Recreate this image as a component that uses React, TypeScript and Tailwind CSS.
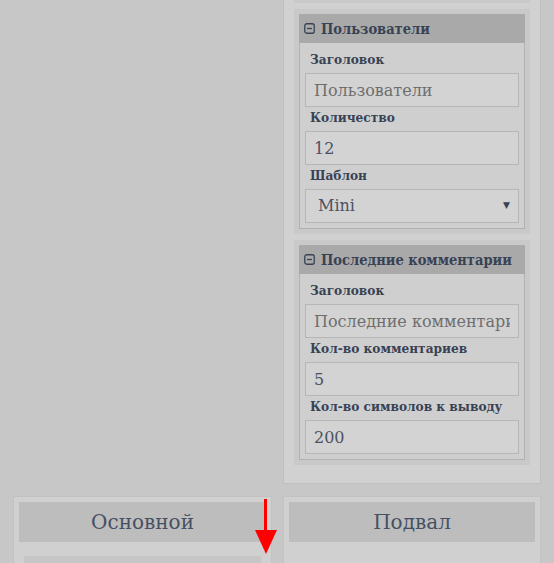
import React from 'react';

const serif = { fontFamily: '"DejaVu Serif", "Liberation Serif", serif' };
const condensed = { fontFamily: '"DejaVu Serif Condensed", "DejaVu Serif", serif' };

type Field = { label: string; value?: string; placeholder?: string; select?: boolean };

const widgets: { title: string; fields: Field[] }[] = [
  {
    title: 'Пользователи',
    fields: [
      { label: 'Заголовок', placeholder: 'Пользователи' },
      { label: 'Количество', value: '12' },
      { label: 'Шаблон', value: 'Mini', select: true },
    ],
  },
  {
    title: 'Последние комментарии',
    fields: [
      { label: 'Заголовок', placeholder: 'Последние комментарии' },
      { label: 'Кол-во комментариев', value: '5' },
      { label: 'Кол-во символов к выводу', value: '200' },
    ],
  },
];

export default function App() {
  return (
    <div className="relative w-[554px] h-[563px] overflow-hidden bg-[#c7c7c7] px-[13px]" style={serif}>
      <div className="grid grid-cols-[259px_258px] gap-x-[11px]">
        <div />
        {/* sidebar widgets column */}
        <div className="flex flex-col gap-[6px] border-x border-b border-[#c0c0c0] bg-[#d1d1d1] px-[10px] pb-[18px]">
          <div className="h-[3px] bg-[#c9c9c9]" />
          {widgets.map((w) => (
            <Widget key={w.title} title={w.title} fields={w.fields} />
          ))}
        </div>
      </div>

      <div className="grid grid-cols-[259px_258px] gap-x-[11px] mt-[12px]">
        <Zone title="Основной" inner />
        <Zone title="Подвал" />
      </div>

      {/* red pointer arrow */}
      <svg className="absolute left-[254px] top-[499px]" width="24" height="56" viewBox="0 0 24 56">
        <rect x="10" y="0" width="3" height="34" fill="#ff0000" />
        <polygon points="1,31 23,31 12,55" fill="#ff0000" />
      </svg>
    </div>
  );
}

function Widget({ title, fields }: { title: string; fields: Field[] }) {
  return (
    <div className="bg-[#c9c9c9] p-[5px]">
      <div className="h-[29px] flex items-center gap-[6px] bg-[#a9a9a9] pl-[5px] text-[14.5px] font-bold text-[#384254]" style={condensed}>
        <svg width="11" height="11" viewBox="0 0 11 11">
          <rect x="0.75" y="0.75" width="9.5" height="9.5" rx="2" fill="none" stroke="#384254" strokeWidth="1.3" />
          <line x1="3" y1="5.5" x2="8" y2="5.5" stroke="#384254" strokeWidth="1.3" />
        </svg>
        <span className="whitespace-nowrap">{title}</span>
      </div>
      <div className="border-x border-b border-[#b2b2b2] bg-[#cfcfcf] px-[5px] pt-[6px] pb-[5px]">
        {fields.map((f) => (
          <div key={f.label}>
            <div
              className="h-[18px] leading-[18px] mt-[1px] mb-[5px] pl-[5px] text-[13.5px] font-bold text-[#384254] whitespace-nowrap"
              style={condensed}
            >
              {f.label}
            </div>
            {f.select ? (
              <div className="h-[34px] flex items-center justify-between border border-[#b6b6b6] bg-[#d3d3d3] pl-[12px] pr-[8px] text-[16px] text-[#4b5262]">
                <span>{f.value}</span>
                <span className="text-[9px] text-[#384254]">▼</span>
              </div>
            ) : (
              <input
                readOnly
                defaultValue={f.value}
                placeholder={f.placeholder}
                className="block w-full h-[34px] border border-[#b6b6b6] bg-[#d3d3d3] px-[8px] text-[16px] text-[#4b5262] placeholder:text-[#6e6e6e] outline-none"
                style={serif}
              />
            )}
          </div>
        ))}
      </div>
    </div>
  );
}

function Zone({ title, inner }: { title: string; inner?: boolean }) {
  return (
    <div className="h-[80px] border border-[#c2c2c2] bg-[#d0d0d0] px-[5px] pt-[5px]">
      <div className="h-[40px] flex items-center justify-center bg-[#bdbdbd] text-[20px] text-[#475163]">{title}</div>
      {inner && <div className="mt-[14px] mx-[5px] h-[20px] bg-[#c6c6c6]" />}
    </div>
  );
}
